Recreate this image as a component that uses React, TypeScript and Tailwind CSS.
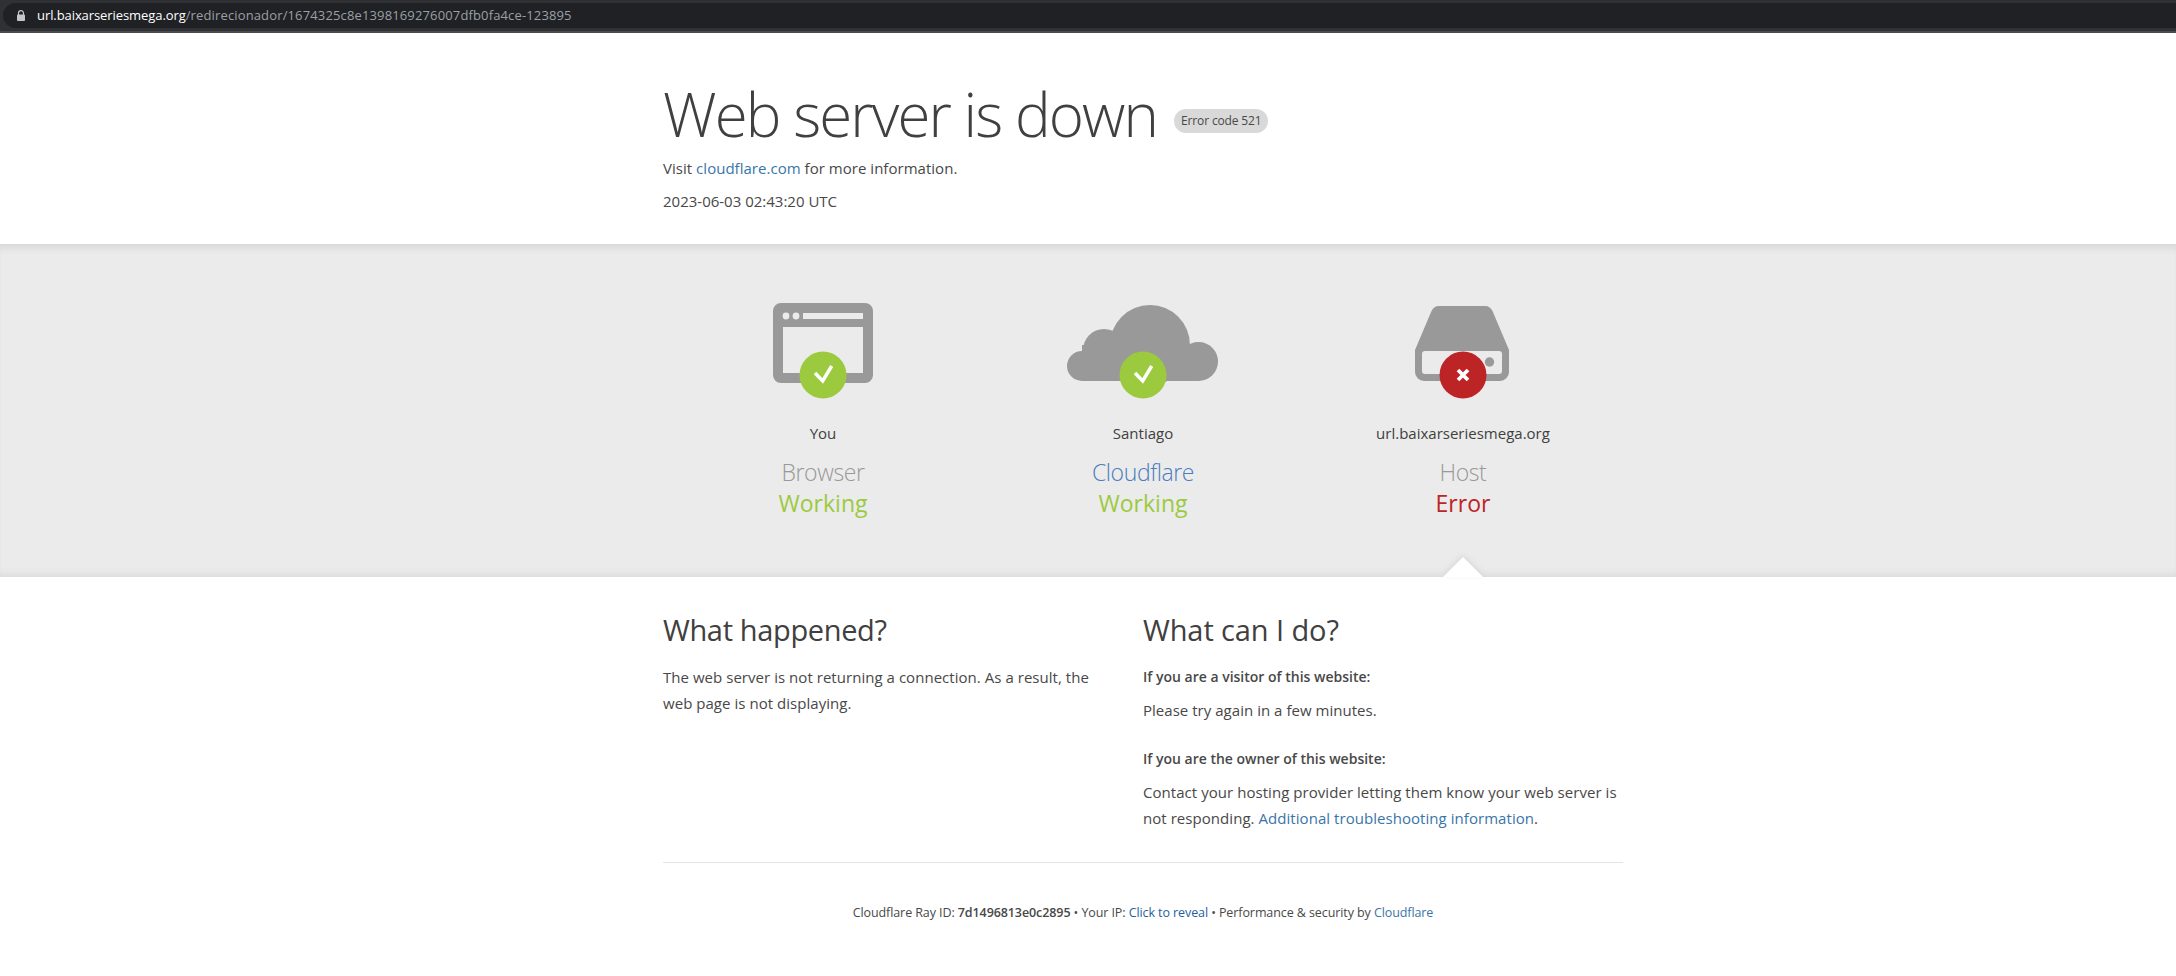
const font = "font-['Open_Sans',sans-serif]";

function StatusBadge({ ok }: { ok: boolean }) {
  return (
    <g>
      <circle cx="80" cy="75" r="23.5" fill={ok ? "#9bca3e" : "#bd2426"} />
      {ok ? (
        <path d="M72 73 L79.700 81 L88.700 66" fill="none" stroke="#fff" strokeWidth="3.500" />
      ) : (
        <path d="M75 70 L85 80 M85 70 L75 80" fill="none" stroke="#fff" strokeWidth="3.800" />
      )}
    </g>
  );
}

function BrowserIcon() {
  return (
    <svg width="160" height="100" viewBox="0 0 160 100">
      <path
        fillRule="evenodd"
        fill="#999"
        d="M38 3 H122 A8 8 0 0 1 130 11 V75 A8 8 0 0 1 122 83 H38 A8 8 0 0 1 30 75 V11 A8 8 0 0 1 38 3 Z M40 27 V73 H120 V27 Z M60 13 V19 H120 V13 Z"
      />
      <circle cx="43" cy="16" r="3.400" fill="#ebebeb" />
      <circle cx="53" cy="16" r="3.400" fill="#ebebeb" />
      <StatusBadge ok />
    </svg>
  );
}

function CloudIcon() {
  return (
    <svg width="160" height="100" viewBox="0 0 160 100" fill="#999">
      <circle cx="19" cy="66" r="15" />
      <circle cx="41" cy="50" r="21" />
      <circle cx="87" cy="45" r="40" />
      <circle cx="135.500" cy="61.500" r="19.500" />
      <rect x="19" y="45" width="117" height="36" />
      <StatusBadge ok />
    </svg>
  );
}

function ServerIcon() {
  return (
    <svg width="160" height="100" viewBox="0 0 160 100">
      <path
        fillRule="evenodd"
        fill="#999"
        d="M56 6 H102 C106 6 108 8 109.500 11 L126 50 V72 A9 9 0 0 1 117 81 H41 A9 9 0 0 1 32 72 V50 L48.500 11 C50 8 52 6 56 6 Z M42 51 C40 51 39 52 39 54 V71 C39 73 40 74 42 74 H116 C118 74 119 73 119 71 V54 C119 52 118 51 116 51 Z"
      />
      <circle cx="106.500" cy="62" r="4.700" fill="#999" />
      <StatusBadge ok={false} />
    </svg>
  );
}

const columns = [
  { icon: <BrowserIcon />, place: "You", name: "Browser", nameColor: "text-[#999999]", status: "Working", statusColor: "text-[#9bca3e]" },
  { icon: <CloudIcon />, place: "Santiago", name: "Cloudflare", nameColor: "text-[#4c7dbb]", status: "Working", statusColor: "text-[#9bca3e]" },
  { icon: <ServerIcon />, place: "url.baixarseriesmega.org", name: "Host", nameColor: "text-[#999999]", status: "Error", statusColor: "text-[#bd2426]" },
];

export default function App() {
  return (
    <div className={`${font} min-h-[976px] bg-white text-[#484848]`}>
      <div className="h-[33px] border-b-2 border-[#4a4b4d] bg-[#303134] pl-[3px] pt-[3px]">
        <div className="flex h-[25px] items-center rounded-l-full bg-[#202124] pl-[14px] text-[13px] text-[#9aa0a6]">
          <svg width="8" height="11" viewBox="0 0 8 11" className="mr-[12px]">
            <path d="M1.500 5 V3.200 A2.500 2.500 0 0 1 6.500 3.200 V5" fill="none" stroke="#c4c7c9" strokeWidth="1.200" />
            <rect x="0" y="4.500" width="8" height="6.500" rx="1" fill="#c4c7c9" />
          </svg>
          <span className="tracking-[-0.08px] text-white">url.baixarseriesmega.org</span>
          <span className="tracking-[0.14px]">/redirecionador/1674325c8e1398169276007dfb0fa4ce-123895</span>
        </div>
      </div>

      <header className="ml-[663px] h-[211px] w-[960px] pt-[48px]">
        <div className="flex items-center">
          <h1 className="text-[60px] font-light leading-[66px] tracking-[-1.9px] text-[#404040]">Web server is down</h1>
          <span className="ml-[17px] mt-[14px] rounded-full bg-[#d9d9d9] px-[7px] py-[3px] text-[12px] leading-[18px] tracking-[-0.15px]">
            Error code 521
          </span>
        </div>
        <p className="mt-[11px] text-[15px] leading-[20px] tracking-[0.03px]">
          Visit <a className="text-[#3a75a8]">cloudflare.com</a> for more information.
        </p>
        <p className="mt-[13px] text-[15px] leading-[20px]">2023-06-03 02:43:20 UTC</p>
      </header>

      <section className="relative h-[333px] bg-[#ebebeb] pt-[56px] shadow-[inset_0_9px_10px_-6px_rgba(0,0,0,0.1),inset_0_-8px_8px_-6px_rgba(0,0,0,0.08)]">
        <div className="ml-[663px] grid w-[960px] grid-cols-3">
          {columns.map((col) => (
            <div key={col.name} className="flex flex-col items-center">
              {col.icon}
              <p className="mt-[23px] text-[15px] leading-[20px] text-[#404040]">{col.place}</p>
              <p className={`mt-[14px] text-[23px] font-light leading-[30px] tracking-[-0.4px] ${col.nameColor}`}>{col.name}</p>
              <p className={`mt-[1px] text-[23px] leading-[31px] ${col.statusColor}`}>{col.status}</p>
            </div>
          ))}
        </div>
        <div className="absolute bottom-0 left-[1443px] h-0 w-0 border-x-[20px] border-b-[20px] border-x-transparent border-b-white [filter:drop-shadow(0_-2px_3px_rgba(0,0,0,0.08))]" />
      </section>

      <main className="ml-[663px] w-[960px] pt-[33px]">
        <div className="grid grid-cols-2">
          <div className="pr-[40px]">
            <h2 className="text-[29px] leading-[40px] tracking-[-0.35px] text-[#404040]">What happened?</h2>
            <p className="mt-[14px] text-[15px] leading-[26px] tracking-[0.04px]">
              The web server is not returning a connection. As a result, the web page is not displaying.
            </p>
          </div>
          <div>
            <h2 className="text-[29px] leading-[40px] tracking-[-0.1px] text-[#404040]">What can I do?</h2>
            <h3 className="mt-[14px] text-[14px] font-semibold leading-[26px]">If you are a visitor of this website:</h3>
            <p className="mt-[7px] text-[15px] leading-[26px] tracking-[0.03px]">Please try again in a few minutes.</p>
            <h3 className="mt-[23px] text-[14px] font-semibold leading-[26px]">If you are the owner of this website:</h3>
            <p className="mt-[7px] text-[15px] leading-[26px] tracking-[0.05px]">
              Contact your hosting provider letting them know your web server is not responding.{" "}
              <a className="text-[#3a75a8]">Additional troubleshooting information</a>.
            </p>
          </div>
        </div>
        <footer className="mt-[31px] border-t border-[#e5e5e5] pt-[40px] text-center text-[12.500px] leading-[20px] tracking-[-0.09px]">
          Cloudflare Ray ID: <strong className="font-semibold">7d1496813e0c2895</strong> • Your IP:{" "}
          <a className="text-[#1f5f9f]">Click to reveal</a> • Performance &amp; security by{" "}
          <a className="text-[#3a75a8]">Cloudflare</a>
        </footer>
      </main>
    </div>
  );
}
